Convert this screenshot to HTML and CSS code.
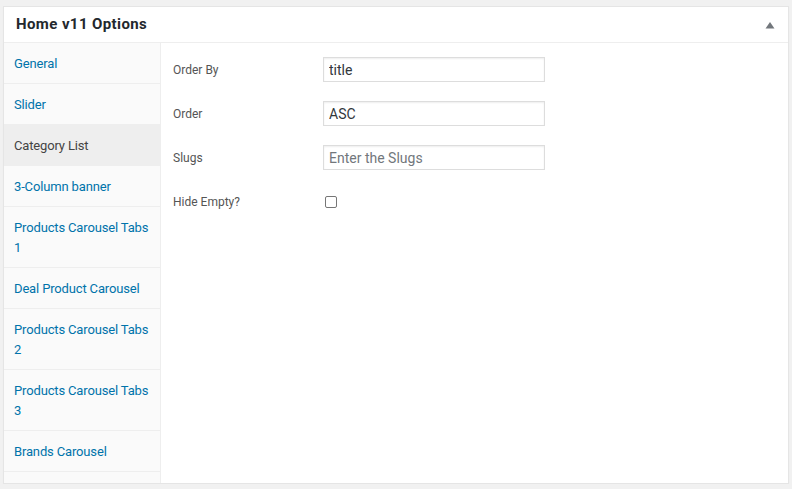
FILE: index.html
```html
<!DOCTYPE html>
<html>
<head>
<meta charset="utf-8">
<link rel="stylesheet" href="styles.css">
</head>
<body>
<div class="postbox">
  <div class="hndle">
    <h2 class="title">Home v11 Options</h2>
    <svg class="toggle" width="10" height="8" viewBox="0 0 10 8"><path d="M5 1 L9.5 7.5 L0.5 7.5 Z" fill="#72777c"/></svg>
  </div>
  <div class="inside">
    <ul class="tabs">
      <li class="tab"><a>General</a></li>
      <li class="tab"><a>Slider</a></li>
      <li class="tab active"><a>Category List</a></li>
      <li class="tab"><a>3-Column banner</a></li>
      <li class="tab"><a>Products Carousel Tabs 1</a></li>
      <li class="tab"><a>Deal Product Carousel</a></li>
      <li class="tab"><a>Products Carousel Tabs 2</a></li>
      <li class="tab"><a>Products Carousel Tabs 3</a></li>
      <li class="tab"><a>Brands Carousel</a></li>
    </ul>
    <div class="panel">
      <div class="field">
        <label class="label">Order By</label>
        <input class="input" type="text" value="title">
      </div>
      <div class="field">
        <label class="label">Order</label>
        <input class="input" type="text" value="ASC">
      </div>
      <div class="field">
        <label class="label">Slugs</label>
        <input class="input" type="text" placeholder="Enter the Slugs">
      </div>
      <div class="field">
        <label class="label">Hide Empty?</label>
        <span class="checkbox"></span>
      </div>
    </div>
  </div>
</div>
</body>
</html>
```
FILE: styles.css
```css
* { box-sizing: border-box; }
html, body { margin: 0; padding: 0; }
body {
  background: #f1f1f1;
  padding: 6px 3px 0 3px;
  font-family: Roboto, "Liberation Sans", sans-serif;
}
.postbox {
  width: 786px;
  background: #fff;
  border: 1px solid #e5e5e5;
  box-shadow: 0 1px 1px rgba(0,0,0,0.04);
}
.hndle {
  height: 36px;
  border-bottom: 1px solid #eee;
  display: flex;
  align-items: center;
  justify-content: space-between;
  padding: 0 12px 0 12px;
}
.title {
  margin: 0;
  margin-top: -1px;
  font-size: 15px;
  font-weight: 700;
  color: #23282d;
  line-height: 1;
  letter-spacing: 0.4px;
}
.toggle { margin-top: 1px; margin-right: 1px; }
.inside {
  display: flex;
  align-items: stretch;
}
.tabs {
  list-style: none;
  margin: 0;
  padding: 0 0 11px 0;
  width: 157px;
  background: #fafafa;
  border-right: 1px solid #eee;
}
.tab {
  border-bottom: 1px solid #eee;
  padding: 11px 2px 9px 10px;
  font-size: 13px;
  line-height: 20px;
  letter-spacing: -0.15px;
}
.tab a { color: #0073aa; }
.tab.active { background: #eee; }
.tab.active a { color: #444; }
.panel {
  flex: 1;
  padding: 14px 12px;
}
.field {
  display: flex;
  align-items: center;
  height: 25px;
  margin-bottom: 19px;
}
.label {
  width: 150px;
  font-size: 12px;
  color: #555;
}
.input {
  width: 222px;
  height: 25px;
  margin: 0;
  border: 1px solid #ddd;
  box-shadow: inset 0 1px 2px rgba(0,0,0,0.07);
  padding: 0 5px;
  font-family: Roboto, "Liberation Sans", sans-serif;
  font-size: 14px;
  color: #32373c;
  outline: none;
}
.input::placeholder { color: #72777c; }
.checkbox {
  display: block;
  width: 12px;
  height: 12px;
  margin-left: 2px;
  margin-top: 1px;
  border: 1px solid #767676;
  border-radius: 2px;
  background: #fff;
}
```
